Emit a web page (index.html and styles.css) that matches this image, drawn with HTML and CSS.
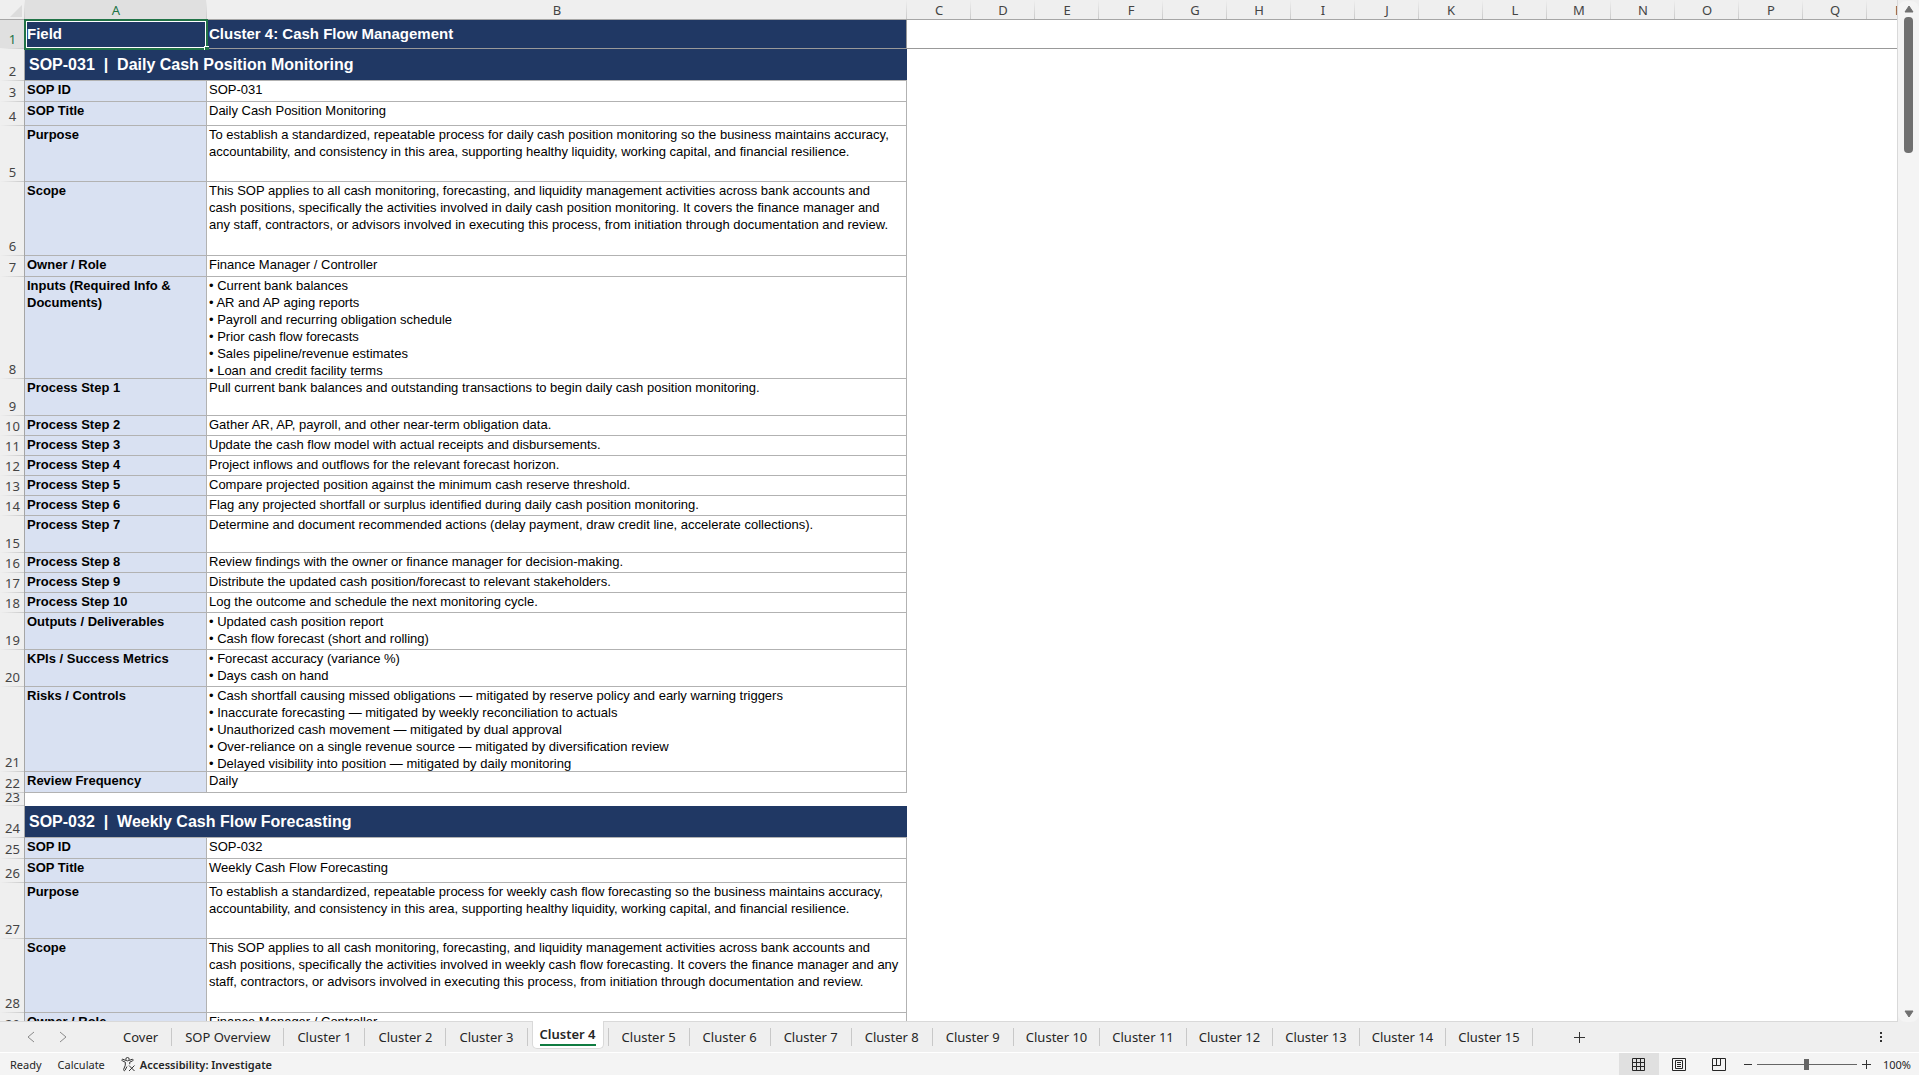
FILE: index.html
```
<!DOCTYPE html>
<html lang="en">
<head>
    <meta charset="UTF-8">
    <meta name="viewport" content="width=device-width, initial-scale=1.0">
    <title>Cluster 4 - Cash Flow Management SOPs</title>
    <link rel="stylesheet" href="styles.css">
</head>
<body>

    <!-- Grid and scrollbar -->
    <div class="workspace">
        <div class="sheet">
            <table class="grid">
                <colgroup>
                    <col class="col-num">
                    <col class="col-a">
                    <col class="col-b">
                    <col span="16" class="col-std">
                </colgroup>
                <thead>
                    <tr class="letters">
                        <th class="corner"><svg width="12" height="12" viewBox="0 0 12 12"><path d="M12 0v12H0z" fill="#dcdcdc"/></svg></th>
                        <th class="active">A</th><th>B</th><th>C</th><th>D</th><th>E</th><th>F</th><th>G</th><th>H</th><th>I</th><th>J</th><th>K</th><th>L</th><th>M</th><th>N</th><th>O</th><th>P</th><th>Q</th><th>R</th>
                    </tr>
                    <tr class="h-head">
                        <th class="num active">1</th>
                        <td class="selected">Field<span class="fill-handle"></span></td>
                        <td class="head">Cluster 4: Cash Flow Management</td>
                        <td class="blank" colspan="16"></td>
                    </tr>
                </thead>
                <tbody>
                    <tr class="h-section"><th class="num">2</th><td class="section" colspan="2">SOP-031&nbsp; |&nbsp; Daily Cash Position Monitoring</td></tr>
                    <tr class="h-field"><th class="num">3</th><td class="label">SOP ID</td><td class="value">SOP-031</td></tr>
                    <tr class="h-title"><th class="num">4</th><td class="label">SOP Title</td><td class="value">Daily Cash Position Monitoring</td></tr>
                    <tr class="h-purpose"><th class="num">5</th><td class="label">Purpose</td><td class="value">To establish a standardized, repeatable process for daily cash position monitoring so the business maintains accuracy,<br>accountability, and consistency in this area, supporting healthy liquidity, working capital, and financial resilience.</td></tr>
                    <tr class="h-scope"><th class="num">6</th><td class="label">Scope</td><td class="value">This SOP applies to all cash monitoring, forecasting, and liquidity management activities across bank accounts and<br>cash positions, specifically the activities involved in daily cash position monitoring. It covers the finance manager and<br>any staff, contractors, or advisors involved in executing this process, from initiation through documentation and review.</td></tr>
                    <tr class="h-field"><th class="num">7</th><td class="label">Owner / Role</td><td class="value">Finance Manager / Controller</td></tr>
                    <tr class="h-list"><th class="num">8</th><td class="label">Inputs (Required Info &amp;<br>Documents)</td><td class="value">• Current bank balances<br>• AR and AP aging reports<br>• Payroll and recurring obligation schedule<br>• Prior cash flow forecasts<br>• Sales pipeline/revenue estimates<br>• Loan and credit facility terms</td></tr>
                    <tr class="h-double"><th class="num">9</th><td class="label">Process Step 1</td><td class="value">Pull current bank balances and outstanding transactions to begin daily cash position monitoring.</td></tr>
                    <tr class="h-step"><th class="num">10</th><td class="label">Process Step 2</td><td class="value">Gather AR, AP, payroll, and other near-term obligation data.</td></tr>
                    <tr class="h-step"><th class="num">11</th><td class="label">Process Step 3</td><td class="value">Update the cash flow model with actual receipts and disbursements.</td></tr>
                    <tr class="h-step"><th class="num">12</th><td class="label">Process Step 4</td><td class="value">Project inflows and outflows for the relevant forecast horizon.</td></tr>
                    <tr class="h-step"><th class="num">13</th><td class="label">Process Step 5</td><td class="value">Compare projected position against the minimum cash reserve threshold.</td></tr>
                    <tr class="h-step"><th class="num">14</th><td class="label">Process Step 6</td><td class="value">Flag any projected shortfall or surplus identified during daily cash position monitoring.</td></tr>
                    <tr class="h-double"><th class="num">15</th><td class="label">Process Step 7</td><td class="value">Determine and document recommended actions (delay payment, draw credit line, accelerate collections).</td></tr>
                    <tr class="h-step"><th class="num">16</th><td class="label">Process Step 8</td><td class="value">Review findings with the owner or finance manager for decision-making.</td></tr>
                    <tr class="h-step"><th class="num">17</th><td class="label">Process Step 9</td><td class="value">Distribute the updated cash position/forecast to relevant stakeholders.</td></tr>
                    <tr class="h-step"><th class="num">18</th><td class="label">Process Step 10</td><td class="value">Log the outcome and schedule the next monitoring cycle.</td></tr>
                    <tr class="h-double"><th class="num">19</th><td class="label">Outputs / Deliverables</td><td class="value">• Updated cash position report<br>• Cash flow forecast (short and rolling)</td></tr>
                    <tr class="h-double"><th class="num">20</th><td class="label">KPIs / Success Metrics</td><td class="value">• Forecast accuracy (variance %)<br>• Days cash on hand</td></tr>
                    <tr class="h-list"><th class="num">21</th><td class="label">Risks / Controls</td><td class="value">• Cash shortfall causing missed obligations — mitigated by reserve policy and early warning triggers<br>• Inaccurate forecasting — mitigated by weekly reconciliation to actuals<br>• Unauthorized cash movement — mitigated by dual approval<br>• Over-reliance on a single revenue source — mitigated by diversification review<br>• Delayed visibility into position — mitigated by daily monitoring</td></tr>
                    <tr class="h-field"><th class="num">22</th><td class="label">Review Frequency</td><td class="value">Daily</td></tr>
                    <tr class="h-gap"><th class="num">23</th><td class="spacer" colspan="2"></td></tr>
                    <tr class="h-section"><th class="num">24</th><td class="section" colspan="2">SOP-032&nbsp; |&nbsp; Weekly Cash Flow Forecasting</td></tr>
                    <tr class="h-field"><th class="num">25</th><td class="label">SOP ID</td><td class="value">SOP-032</td></tr>
                    <tr class="h-title"><th class="num">26</th><td class="label">SOP Title</td><td class="value">Weekly Cash Flow Forecasting</td></tr>
                    <tr class="h-purpose"><th class="num">27</th><td class="label">Purpose</td><td class="value">To establish a standardized, repeatable process for weekly cash flow forecasting so the business maintains accuracy,<br>accountability, and consistency in this area, supporting healthy liquidity, working capital, and financial resilience.</td></tr>
                    <tr class="h-scope"><th class="num">28</th><td class="label">Scope</td><td class="value">This SOP applies to all cash monitoring, forecasting, and liquidity management activities across bank accounts and<br>cash positions, specifically the activities involved in weekly cash flow forecasting. It covers the finance manager and any<br>staff, contractors, or advisors involved in executing this process, from initiation through documentation and review.</td></tr>
                    <tr class="h-field"><th class="num">29</th><td class="label">Owner / Role</td><td class="value">Finance Manager / Controller</td></tr>
                </tbody>
            </table>
        </div>

        <div class="scrollbar">
            <button class="scroll-btn" aria-label="Scroll up"><svg width="10" height="8" viewBox="0 0 10 8"><path d="M5 1 9 7H1z" fill="#707070" stroke="#707070" stroke-linejoin="round"/></svg></button>
            <div class="thumb"></div>
            <button class="scroll-btn bottom" aria-label="Scroll down"><svg width="10" height="8" viewBox="0 0 10 8"><path d="M5 7 1 1h8z" fill="#707070" stroke="#707070" stroke-linejoin="round"/></svg></button>
        </div>
    </div>

    <!-- Sheet tabs -->
    <nav class="tabs">
        <div class="tab-arrows">
            <button aria-label="Previous sheets"><svg width="8" height="12" viewBox="0 0 8 12"><path d="M7 1 1 6l6 5"/></svg></button>
            <button aria-label="Next sheets"><svg width="8" height="12" viewBox="0 0 8 12"><path d="m1 1 6 5-6 5"/></svg></button>
        </div>
        <button class="tab">Cover</button>
        <button class="tab">SOP Overview</button>
        <button class="tab">Cluster 1</button>
        <button class="tab">Cluster 2</button>
        <button class="tab">Cluster 3</button>
        <button class="tab current"><span>Cluster 4</span></button>
        <button class="tab">Cluster 5</button>
        <button class="tab">Cluster 6</button>
        <button class="tab">Cluster 7</button>
        <button class="tab">Cluster 8</button>
        <button class="tab">Cluster 9</button>
        <button class="tab long">Cluster 10</button>
        <button class="tab long">Cluster 11</button>
        <button class="tab long">Cluster 12</button>
        <button class="tab long">Cluster 13</button>
        <button class="tab long">Cluster 14</button>
        <button class="tab long">Cluster 15</button>
        <button class="add-sheet" aria-label="New sheet"><svg width="11" height="11" viewBox="0 0 11 11"><path d="M5.500 0v11M0 5.500h11" stroke="#333"/></svg></button>
        <button class="more" aria-label="More"><svg width="2" height="10" viewBox="0 0 2 10"><path d="M0 0h2v2H0zM0 4h2v2H0zM0 8h2v2H0z" fill="#333"/></svg></button>
    </nav>

    <!-- Status bar -->
    <footer class="status">
        <span>Ready</span>
        <span>Calculate</span>
        <button class="a11y">
            <svg width="15" height="15" viewBox="0 0 15 15" fill="none" stroke="#333"><circle cx="6.500" cy="2.200" r="1.700"/><path d="M4.800 3.500 2 2.300c-1-.4-1.700 1-.7 1.500l3 1.400v3L2.600 12.500c-.4 1.100 1 1.700 1.500.7L6 9.500M8.200 3.500 11 2.300c1-.4 1.700 1 .7 1.500l-3 1.400v2M8 8.500l5.500 5.500M13.500 8.500 8 14"/></svg>
            Accessibility: Investigate
        </button>
        <div class="views">
            <button class="on" aria-label="Normal"><svg width="13" height="13" viewBox="0 0 13 13"><path d="M.5.5h12v12H.5zM4.500 0v13M8.500 0v13M0 4.500h13M0 8.500h13"/></svg></button>
            <button aria-label="Page Layout"><svg width="14" height="13" viewBox="0 0 14 13"><path d="M.5.5h13v12H.5zM3.500 2.500h7v8h-7zM5 4.500h4M5 6.500h4M5 8.500h4"/></svg></button>
            <button aria-label="Page Break Preview"><svg width="14" height="13" viewBox="0 0 14 13"><path d="M.5.5h13v12H.5zM.5 7.500h8V.5M4.500.5v7"/></svg></button>
        </div>
        <div class="zoom">
            <button aria-label="Zoom out"><svg width="8" height="9" viewBox="0 0 8 9"><path d="M0 4.500h8"/></svg></button>
            <input type="range" min="0" max="100" value="50" aria-label="Zoom">
            <button aria-label="Zoom in"><svg width="9" height="9" viewBox="0 0 9 9"><path d="M0 4.500h9M4.500 0v9"/></svg></button>
        </div>
        <button class="percent">100%</button>
    </footer>

</body>
</html>
```
FILE: styles.css
```
* {
    margin: 0;
    padding: 0;
    box-sizing: border-box;
}

body {
    display: flex;
    flex-direction: column;
    height: 100vh;
    overflow: hidden;
    background: #efefef;
    color: #262626;
    font-family: "Noto Sans", sans-serif;
    font-size: 13px;
}

button {
    display: flex;
    align-items: center;
    justify-content: center;
    background: none;
    border: none;
    color: inherit;
    font: inherit;
    cursor: pointer;
}

/* Workspace */
.workspace {
    flex: 1;
    min-height: 0;
    display: flex;
}

.sheet {
    flex: 1;
    min-width: 0;
    overflow: hidden;
    background: #fff;
    border-right: 1px solid #d9d9d9;
    border-bottom: 1px solid #d9d9d9;
}

/* Grid */
.grid {
    width: 1931px;
    table-layout: fixed;
    border-collapse: separate;
    border-spacing: 0;
    font-family: "Liberation Sans", Arial, sans-serif;
    font-size: 13px;
    line-height: 17px;
    color: #000;
}

.col-num { width: 25px; }
.col-a { width: 182px; }
.col-b { width: 700px; }
.col-std { width: 64px; }

.letters th {
    height: 20px;
    background: linear-gradient(#efefef, #c8c8c8) right / 1px 100% no-repeat #efefef;
    box-shadow: inset 0 -1px #a6a6a6;
    color: #444;
    font-family: "Noto Sans", sans-serif;
    font-size: 13px;
    font-weight: normal;
    line-height: 17px;
}

.letters .active {
    background-color: #e0e0e0;
    color: #217346;
}

.letters .corner {
    padding: 0 3px 3px 0;
    text-align: right;
    vertical-align: bottom;
    line-height: 0;
}

.corner svg {
    display: inline-block;
}

.num {
    padding-bottom: 1px;
    background: linear-gradient(90deg, #efefef, #c8c8c8) bottom / 100% 1px no-repeat #efefef;
    box-shadow: inset -1px 0 #a6a6a6;
    color: #444;
    font-family: "Noto Sans", sans-serif;
    font-size: 13px;
    font-weight: normal;
    line-height: 17px;
    text-align: center;
    vertical-align: bottom;
}

.num.active {
    background-color: #e0e0e0;
    color: #217346;
}

.grid td {
    padding: 0 2px;
    vertical-align: top;
    white-space: nowrap;
}

.grid .label {
    background: #d9e1f2;
    box-shadow: inset -1px -1px #b2b2b2;
    font-weight: bold;
}

.grid .value {
    box-shadow: inset -1px -1px #b2b2b2;
}

.grid .spacer {
    background: #fff;
}

.grid .head,
.grid .selected {
    position: relative;
    padding-bottom: 2px;
    background: #203864;
    color: #fff;
    font-size: 15px;
    font-weight: bold;
    vertical-align: middle;
}

.grid .head {
    box-shadow: inset -1px -1px #999;
}

.grid .blank {
    box-shadow: inset 0 -1px #999;
}

.grid .selected {
    outline: 2px solid #217346;
    outline-offset: -1px;
    box-shadow: inset 0 0 0 2px #fff;
    z-index: 1;
}

.fill-handle {
    position: absolute;
    right: -2px;
    bottom: -1px;
    width: 5px;
    height: 4px;
    background: #217346;
    border-top: 1px solid #fff;
    border-left: 1px solid #fff;
}

.grid .section {
    padding: 0 4px 2px;
    background: #203864;
    box-shadow: inset 0 -1px #b2b2b2;
    color: #fff;
    font-size: 16px;
    font-weight: bold;
    vertical-align: middle;
}

/* Row heights */
.h-head { height: 29px; }
.h-section { height: 32px; }
.h-field { height: 21px; }
.h-title { height: 24px; }
.h-purpose { height: 56px; }
.h-scope { height: 74px; }
.h-double { height: 37px; }
.h-step { height: 20px; }
.h-list { height: auto; }
.h-gap { height: 13px; }

.h-gap .num {
    padding: 0 0 4px;
    line-height: 9px;
}

/* Scrollbar */
.scrollbar {
    width: 21px;
    margin: 1px 0 0;
    display: flex;
    flex-direction: column;
    align-items: center;
    background: #f4f4f4;
    border-radius: 8px;
}

.scroll-btn {
    width: 16px;
    height: 16px;
}

.scroll-btn.bottom {
    margin-top: auto;
}

.thumb {
    width: 9px;
    height: 136px;
    background: #707070;
    border-radius: 4px;
}

/* Sheet tabs */
.tabs {
    height: 31px;
    display: flex;
    align-items: center;
    border-bottom: 1px solid #fff;
}

.tab-arrows {
    width: 110px;
    padding-left: 27px;
    display: flex;
    gap: 24px;
}

.tab-arrows svg {
    fill: none;
    stroke: #8a8a8a;
}

.tab {
    height: 18px;
    padding: 0 13px;
    border-right: 1px solid #c8c8c8;
    white-space: nowrap;
}

.tab.long {
    padding: 0 12px;
}

.tab.current {
    position: relative;
    align-self: flex-start;
    height: 28px;
    margin: -1px 4px 0;
    border: 1px solid #d9d9d9;
    border-top: none;
    border-radius: 0 0 5px 5px;
    background: #fff;
    padding: 0 7px;
    font-weight: 600;
}

.tab.current span {
    border-bottom: 2px solid #107c41;
    line-height: 20px;
}

.tab.current + .tab {
    border-left: 1px solid #c8c8c8;
}

.add-sheet {
    width: 30px;
    height: 24px;
    margin-left: 32px;
}

.more {
    width: 20px;
    height: 24px;
    margin-left: auto;
    margin-right: 28px;
}

/* Status bar */
.status {
    height: 22px;
    padding: 0 8px 0 10px;
    display: flex;
    align-items: center;
    background: #f4f4f4;
    font-size: 11px;
}

.status > span {
    margin-right: 16px;
}

.a11y {
    gap: 4px;
    font-weight: 600;
}

.views {
    height: 100%;
    margin-left: auto;
    display: flex;
}

.views button {
    width: 40px;
}

.views .on {
    background: #e0e0e0;
}

.views svg {
    fill: none;
    stroke: #262626;
}

.zoom {
    display: flex;
    align-items: center;
    gap: 5px;
    margin: 0 12px 0 5px;
}

.zoom svg {
    stroke: #333;
}

.zoom input {
    width: 100px;
    height: 11px;
    appearance: none;
    background: linear-gradient(#666, #666) center / 100% 1px no-repeat;
}

.zoom input::-webkit-slider-thumb {
    appearance: none;
    width: 5px;
    height: 11px;
    background: #666;
}
```
